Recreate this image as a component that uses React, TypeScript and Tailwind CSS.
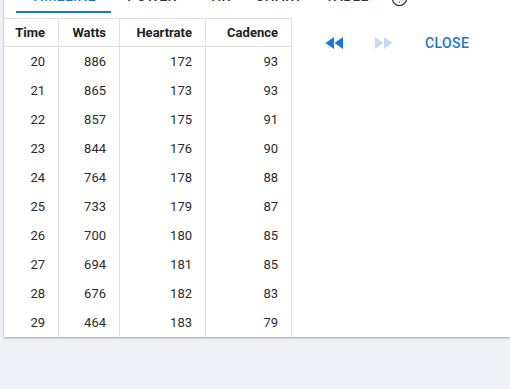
import React from "react";
import { CircleHelp } from "lucide-react";

type Row = { time: number; watts: number; hr: number; cadence: number };

const rows: Row[] = [
  { time: 20, watts: 886, hr: 172, cadence: 93 },
  { time: 21, watts: 865, hr: 173, cadence: 93 },
  { time: 22, watts: 857, hr: 175, cadence: 91 },
  { time: 23, watts: 844, hr: 176, cadence: 90 },
  { time: 24, watts: 764, hr: 178, cadence: 88 },
  { time: 25, watts: 733, hr: 179, cadence: 87 },
  { time: 26, watts: 700, hr: 180, cadence: 85 },
  { time: 27, watts: 694, hr: 181, cadence: 85 },
  { time: 28, watts: 676, hr: 182, cadence: 83 },
  { time: 29, watts: 464, hr: 183, cadence: 79 },
];

const tabs = [
  { label: "Timeline", w: "w-[95px]", active: true },
  { label: "Power", w: "w-[82px]" },
  { label: "HR", w: "w-[56px]" },
  { label: "Chart", w: "w-[60px]" },
  { label: "Table", w: "w-[76px]" },
];

const cols = ["w-[55px]", "w-[61px]", "w-[86px]", "w-[86px]"];

const Cell: React.FC<{ i: number; head?: boolean; children: React.ReactNode }> = ({ i, head, children }) => (
  <div
    className={`${cols[i]} self-stretch flex items-center justify-end border-r border-[#e0e0e0] pr-[13px] ${
      head ? "font-bold text-[#212121]" : "text-[#2b2b2b]"
    }`}
  >
    {children}
  </div>
);

const App: React.FC = () => {
  return (
    <div
      className="flex flex-col w-[510px] h-[389px] bg-[#f0f1f6] overflow-hidden"
      style={{ fontFamily: "Roboto, 'Liberation Sans', sans-serif" }}
    >
      <div className="-mt-[12px] ml-[4px] bg-white shadow-[0_1px_2px_rgba(0,0,0,0.35)]">
        {/* tabs */}
        <div className="flex pl-[12px] h-[25px]">
          {tabs.map((t) => (
            <div key={t.label} className={`${t.w} flex flex-col justify-between`}>
              <div
                className={`-mt-[2px] text-[14px] leading-[20px] font-medium uppercase tracking-[0.4px] text-center ${
                  t.active ? "text-[#1976d2]" : "text-[#333]"
                }`}
              >
                {t.label}
              </div>
              {t.active && <div className="h-[2px] bg-[#1976d2]" />}
            </div>
          ))}
          <div className="w-[28px] flex justify-center items-start pt-[2px]">
            <CircleHelp size={17} strokeWidth={1.8} color="#333" />
          </div>
        </div>

        <div className="flex mt-[5px]">
          {/* table */}
          <div className="text-[13px]">
            <div className="flex h-[29px] border-y border-[#e0e0e0]">
              <Cell i={0} head>Time</Cell>
              <Cell i={1} head>Watts</Cell>
              <Cell i={2} head>Heartrate</Cell>
              <Cell i={3} head>Cadence</Cell>
            </div>
            {rows.map((r) => (
              <div key={r.time} className="flex h-[29px]">
                <Cell i={0}>{r.time}</Cell>
                <Cell i={1}>{r.watts}</Cell>
                <Cell i={2}>{r.hr}</Cell>
                <Cell i={3}>{r.cadence}</Cell>
              </div>
            ))}
          </div>

          {/* controls */}
          <div className="flex items-start pt-[13px] pl-[31px]">
            <button className="w-[24px] h-[24px]">
              <svg width="24" height="24" viewBox="0 0 24 24" fill="#1976d2">
                <path d="M11 18V6l-8.5 6 8.5 6zm.5-6l8.5 6V6l-8.5 6z" />
              </svg>
            </button>
            <button className="w-[24px] h-[24px] ml-[24px]">
              <svg width="24" height="24" viewBox="0 0 24 24" fill="#c3dbf6">
                <path d="M4 18l8.5-6L4 6v12zm9-12v12l8.5-6L13 6z" />
              </svg>
            </button>
            <button className="ml-[30px] h-[24px] text-[14px] leading-[24px] font-medium uppercase tracking-[0.4px] text-[#1976d2]">
              Close
            </button>
          </div>
        </div>
      </div>
    </div>
  );
};

export default App;
